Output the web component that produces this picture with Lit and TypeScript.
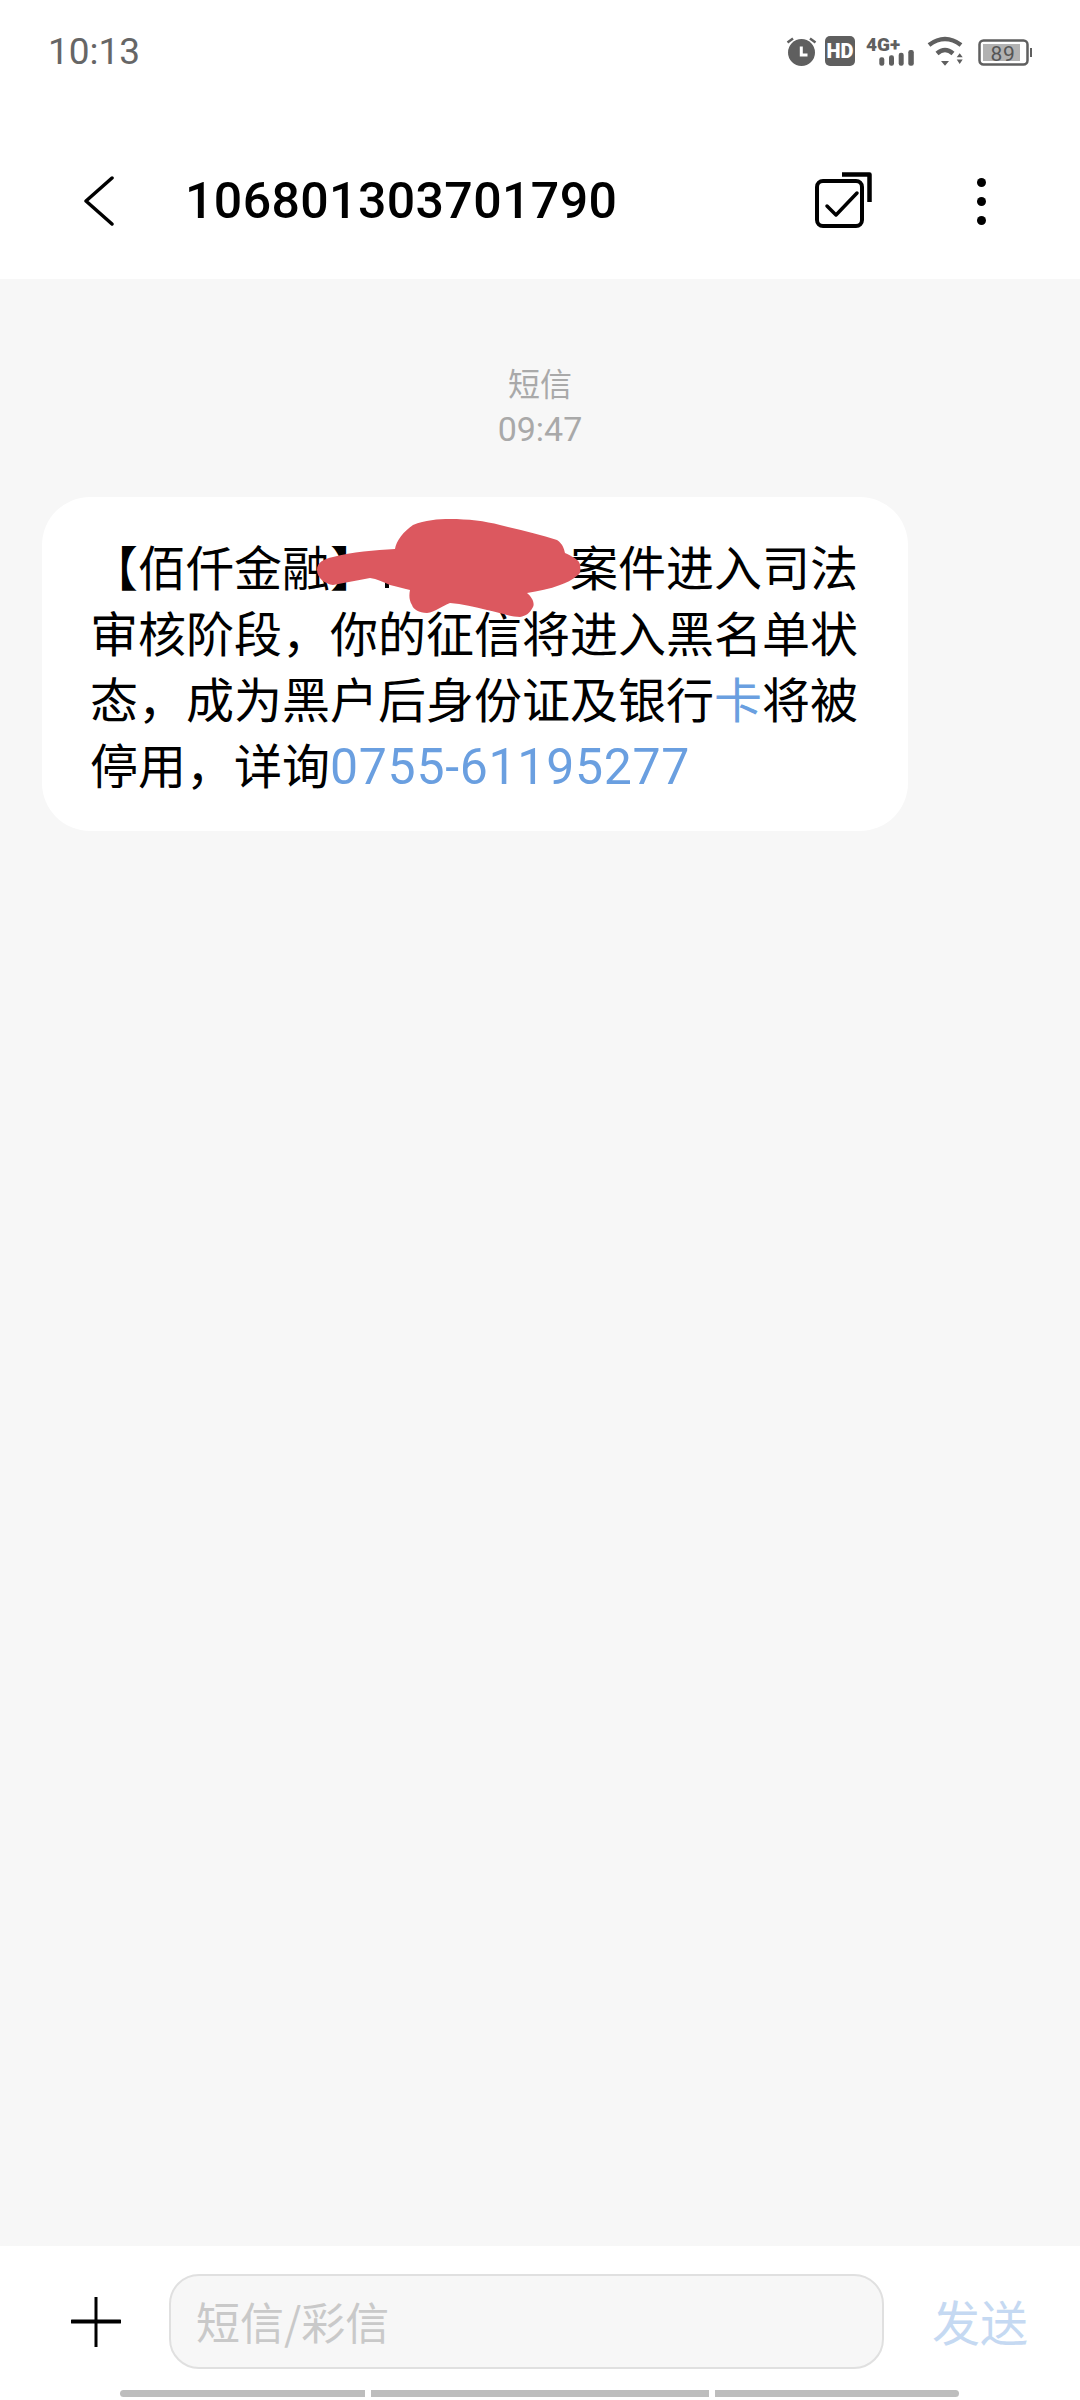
import { LitElement, html, css } from 'lit'
import { customElement } from 'lit/decorators.js'

@customElement('app-root')
export class AppRoot extends LitElement {
  static styles = css`
    :host {
      display: flex;
      flex-direction: column;
      width: 1080px;
      height: 2400px;
      background: #ffffff;
      font-family: Roboto, "Noto Sans CJK SC", sans-serif;
      overflow: hidden;
    }

    /* status bar */
    .status {
      display: flex;
      align-items: center;
      justify-content: space-between;
      height: 102px;
      padding: 0 48px;
      flex: none;
    }
    .time {
      font-size: 37px;
      color: #666666;
      line-height: 1;
    }
    .status-icons {
      display: flex;
      align-items: center;
      height: 30px;
    }
    .status-icons svg {
      display: block;
      height: 30px;
      overflow: visible;
    }
    .alarm { width: 29px; margin-right: 9px; }
    .hd { width: 30px; margin-right: 11px; }
    .net { width: 48px; margin-right: 13px; }
    .wifi { width: 36px; margin-right: 15px; }
    .battery { width: 54px; }
    .status-icons text {
      font-family: Roboto, sans-serif;
    }

    /* title bar */
    .header {
      display: flex;
      align-items: center;
      height: 177px;
      flex: none;
      box-sizing: border-box;
      padding: 21px 0 0 84px;
    }
    .back {
      display: block;
      width: 30px;
      height: 50px;
      margin-right: 71px;
      flex: none;
    }
    .title {
      flex: 1;
      font-size: 50px;
      font-weight: 500;
      letter-spacing: 0.4px;
      color: #000000;
      line-height: 1;
    }
    .select {
      display: block;
      width: 58px;
      height: 58px;
      margin-right: 104px;
      flex: none;
    }
    .more {
      display: flex;
      flex-direction: column;
      gap: 10px;
      margin-right: 94px;
      flex: none;
    }
    .more i {
      display: block;
      width: 9px;
      height: 9px;
      border-radius: 50%;
      background: #000000;
    }

    /* conversation */
    .thread {
      flex: 1;
      background: #f7f7f7;
      padding: 85px 0 0 42px;
    }
    .stamp {
      width: 996px;
      text-align: center;
      color: #a9a9a9;
      margin-bottom: 46px;
    }
    .stamp .kind { font-size: 32px; line-height: 43px; }
    .stamp .at { font-size: 34px; line-height: 44px; }
    .bubble {
      position: relative;
      width: 866px;
      height: 334px;
      box-sizing: border-box;
      padding: 35px 42px 0 48px;
      background: #ffffff;
      border-radius: 48px;
      font-size: 48px;
      line-height: 66px;
      color: #000000;
      font-family: "Noto Sans CJK SC", sans-serif;
    }
    .link { color: #6a9fe0; }
    .phone {
      font-family: Roboto, sans-serif;
      font-size: 50px;
      line-height: 1;
      letter-spacing: 0.7px;
    }
    .gap {
      display: inline-block;
      width: 192px;
    }
    .stub {
      position: absolute;
      left: 343px;
      top: 80px;
      width: 4px;
      height: 11px;
      background: #000000;
    }
    .smear {
      position: absolute;
      left: 268px;
      top: 13px;
      width: 320px;
      height: 115px;
    }

    /* compose bar */
    .compose {
      position: relative;
      display: flex;
      align-items: flex-start;
      height: 154px;
      flex: none;
      box-sizing: border-box;
      padding: 28px 0 0 71px;
    }
    .plus {
      display: block;
      width: 50px;
      height: 50px;
      margin: 23px 48px 0 0;
      flex: none;
    }
    .input {
      width: 715px;
      height: 95px;
      box-sizing: border-box;
      margin-right: 48px;
      padding: 0 0 2px 25px;
      display: flex;
      align-items: center;
      border: 2px solid #e0e0e0;
      border-radius: 30px;
      background: #f7f7f7;
      color: #c9c9c9;
      font-size: 44px;
      font-family: "Noto Sans CJK SC", sans-serif;
    }
    .send {
      font-size: 48px;
      line-height: 93px;
      color: #c5d9f2;
      font-family: "Noto Sans CJK SC", sans-serif;
    }
    .home {
      position: absolute;
      left: 120px;
      bottom: 3px;
      display: flex;
      gap: 6px;
    }
    .home i {
      display: block;
      height: 7px;
      background: #bdbdbd;
    }
    .home i:first-child { width: 245px; border-radius: 4px 0 0 4px; }
    .home i:nth-child(2) { width: 338px; }
    .home i:last-child { width: 244px; border-radius: 0 4px 4px 0; }
  `

  render() {
    return html`
      <div class="status">
        <span class="time">10:13</span>
        <div class="status-icons">
          <svg class="alarm" viewBox="0 0 29 30">
            <circle cx="14.5" cy="16.5" r="13.5" fill="#5f5f5f"></circle>
            <path d="M.5 6.5 6 2.500M23 2.500l5.500 4" stroke="#5f5f5f" stroke-width="2.500" fill="none"></path>
            <path d="M14.300 10.500V19H20.500" stroke="#fff" stroke-width="3" fill="none"></path>
          </svg>
          <svg class="hd" viewBox="0 0 30 30">
            <rect width="30" height="30" rx="5" fill="#5f5f5f"></rect>
            <text x="15" y="22" text-anchor="middle" font-size="20" font-weight="900" fill="#fff">HD</text>
          </svg>
          <svg class="net" viewBox="0 0 48 30">
            <text x="0" y="14.500" font-size="19" font-weight="900" fill="#5f5f5f">4G+</text>
            <rect x="13.300" y="21.300" width="5" height="8.400" rx="2.200" fill="#5f5f5f"></rect>
            <rect x="23" y="19.300" width="5" height="10.400" rx="2.200" fill="#5f5f5f"></rect>
            <rect x="32.700" y="16.700" width="5" height="13" rx="2.200" fill="#5f5f5f"></rect>
            <rect x="42.300" y="14" width="5.500" height="15.700" rx="2.200" fill="#5f5f5f"></rect>
          </svg>
          <svg class="wifi" viewBox="0 0 36 30">
            <path d="M2 9Q18-3 34 9M10 17.500Q18 10.500 26 17.500" stroke="#5f5f5f" stroke-width="4.500" fill="none"></path>
            <path d="M14 25h8l-4 4.700zM29.700 21.300h6l-3-4zM29.700 23.500h6l-3 4.500z" fill="#5f5f5f"></path>
          </svg>
          <svg class="battery" viewBox="0 0 54 30">
            <rect x="1.500" y="4.500" width="48" height="24" rx="4" fill="none" stroke="#5f5f5f" stroke-width="2.500"></rect>
            <rect x="5" y="8" width="37" height="17" fill="#b2b2b2"></rect>
            <rect x="52" y="12" width="2" height="9" fill="#5f5f5f"></rect>
            <text x="25" y="24.500" text-anchor="middle" font-size="21" letter-spacing=".8" fill="#555">89</text>
          </svg>
        </div>
      </div>

      <div class="header">
        <svg class="back" viewBox="0 0 30 50">
          <path d="M28 2 2 25l26 23" fill="none" stroke="#000" stroke-width="3.500" stroke-linecap="round" stroke-linejoin="round"></path>
        </svg>
        <div class="title">106801303701790</div>
        <svg class="select" viewBox="0 0 58 58">
          <rect x="2" y="9" width="45" height="45" rx="6" fill="none" stroke="#000" stroke-width="4"></rect>
          <path d="M12 34l9 9 21-22" fill="none" stroke="#000" stroke-width="3.500" stroke-linecap="round" stroke-linejoin="round"></path>
          <path d="M27 2.500h27.500V30" fill="none" stroke="#000" stroke-width="4.500" stroke-linejoin="round"></path>
        </svg>
        <div class="more"><i></i><i></i><i></i></div>
      </div>

      <div class="thread">
        <div class="stamp">
          <div class="kind">短信</div>
          <div class="at">09:47</div>
        </div>
        <div class="bubble">
          【佰仟金融】<span class="gap"></span>案件进入司法审核阶段，你的征信将进入黑名单状态，成为黑户后身份证及银行<span class="link">卡</span>将被停用，详询<span class="link phone">0755-61195277</span>
          <i class="stub"></i>
          <svg class="smear" viewBox="310 510 320 115">
            <path fill="#dc585f" d="M317 570C317 562 324 559 333 557C352 552 375 550 395 549C396 541 404 531 413 525C425 520 438 519 450 519C468 519 485 521 500 525C520 530 540 534 557 540C563 544 564 549 565 553C571 556 581 560 580 566C581 571 580 574 578 575C572 580 566 583 560 585C550 589 538 591 527 593C532 597 535 603 533 607C530 613 526 616 520 617C510 617 498 612 487 610C475 607 462 604 450 603C442 606 435 612 427 613C419 613 413 609 412 605C409 600 409 595 410 590C403 588 397 587 390 585C383 582 377 579 370 578C358 580 345 583 333 585C325 584 317 578 317 570Z"></path>
          </svg>
        </div>
      </div>

      <div class="compose">
        <svg class="plus" viewBox="0 0 50 50">
          <path d="M25 0V50" stroke="#000" stroke-width="3" stroke-linecap="round"></path>
          <path d="M1 24.500H49" stroke="#000" stroke-width="4" stroke-linecap="round"></path>
        </svg>
        <div class="input">短信/彩信</div>
        <div class="send">发送</div>
        <div class="home"><i></i><i></i><i></i></div>
      </div>
    `
  }
}
